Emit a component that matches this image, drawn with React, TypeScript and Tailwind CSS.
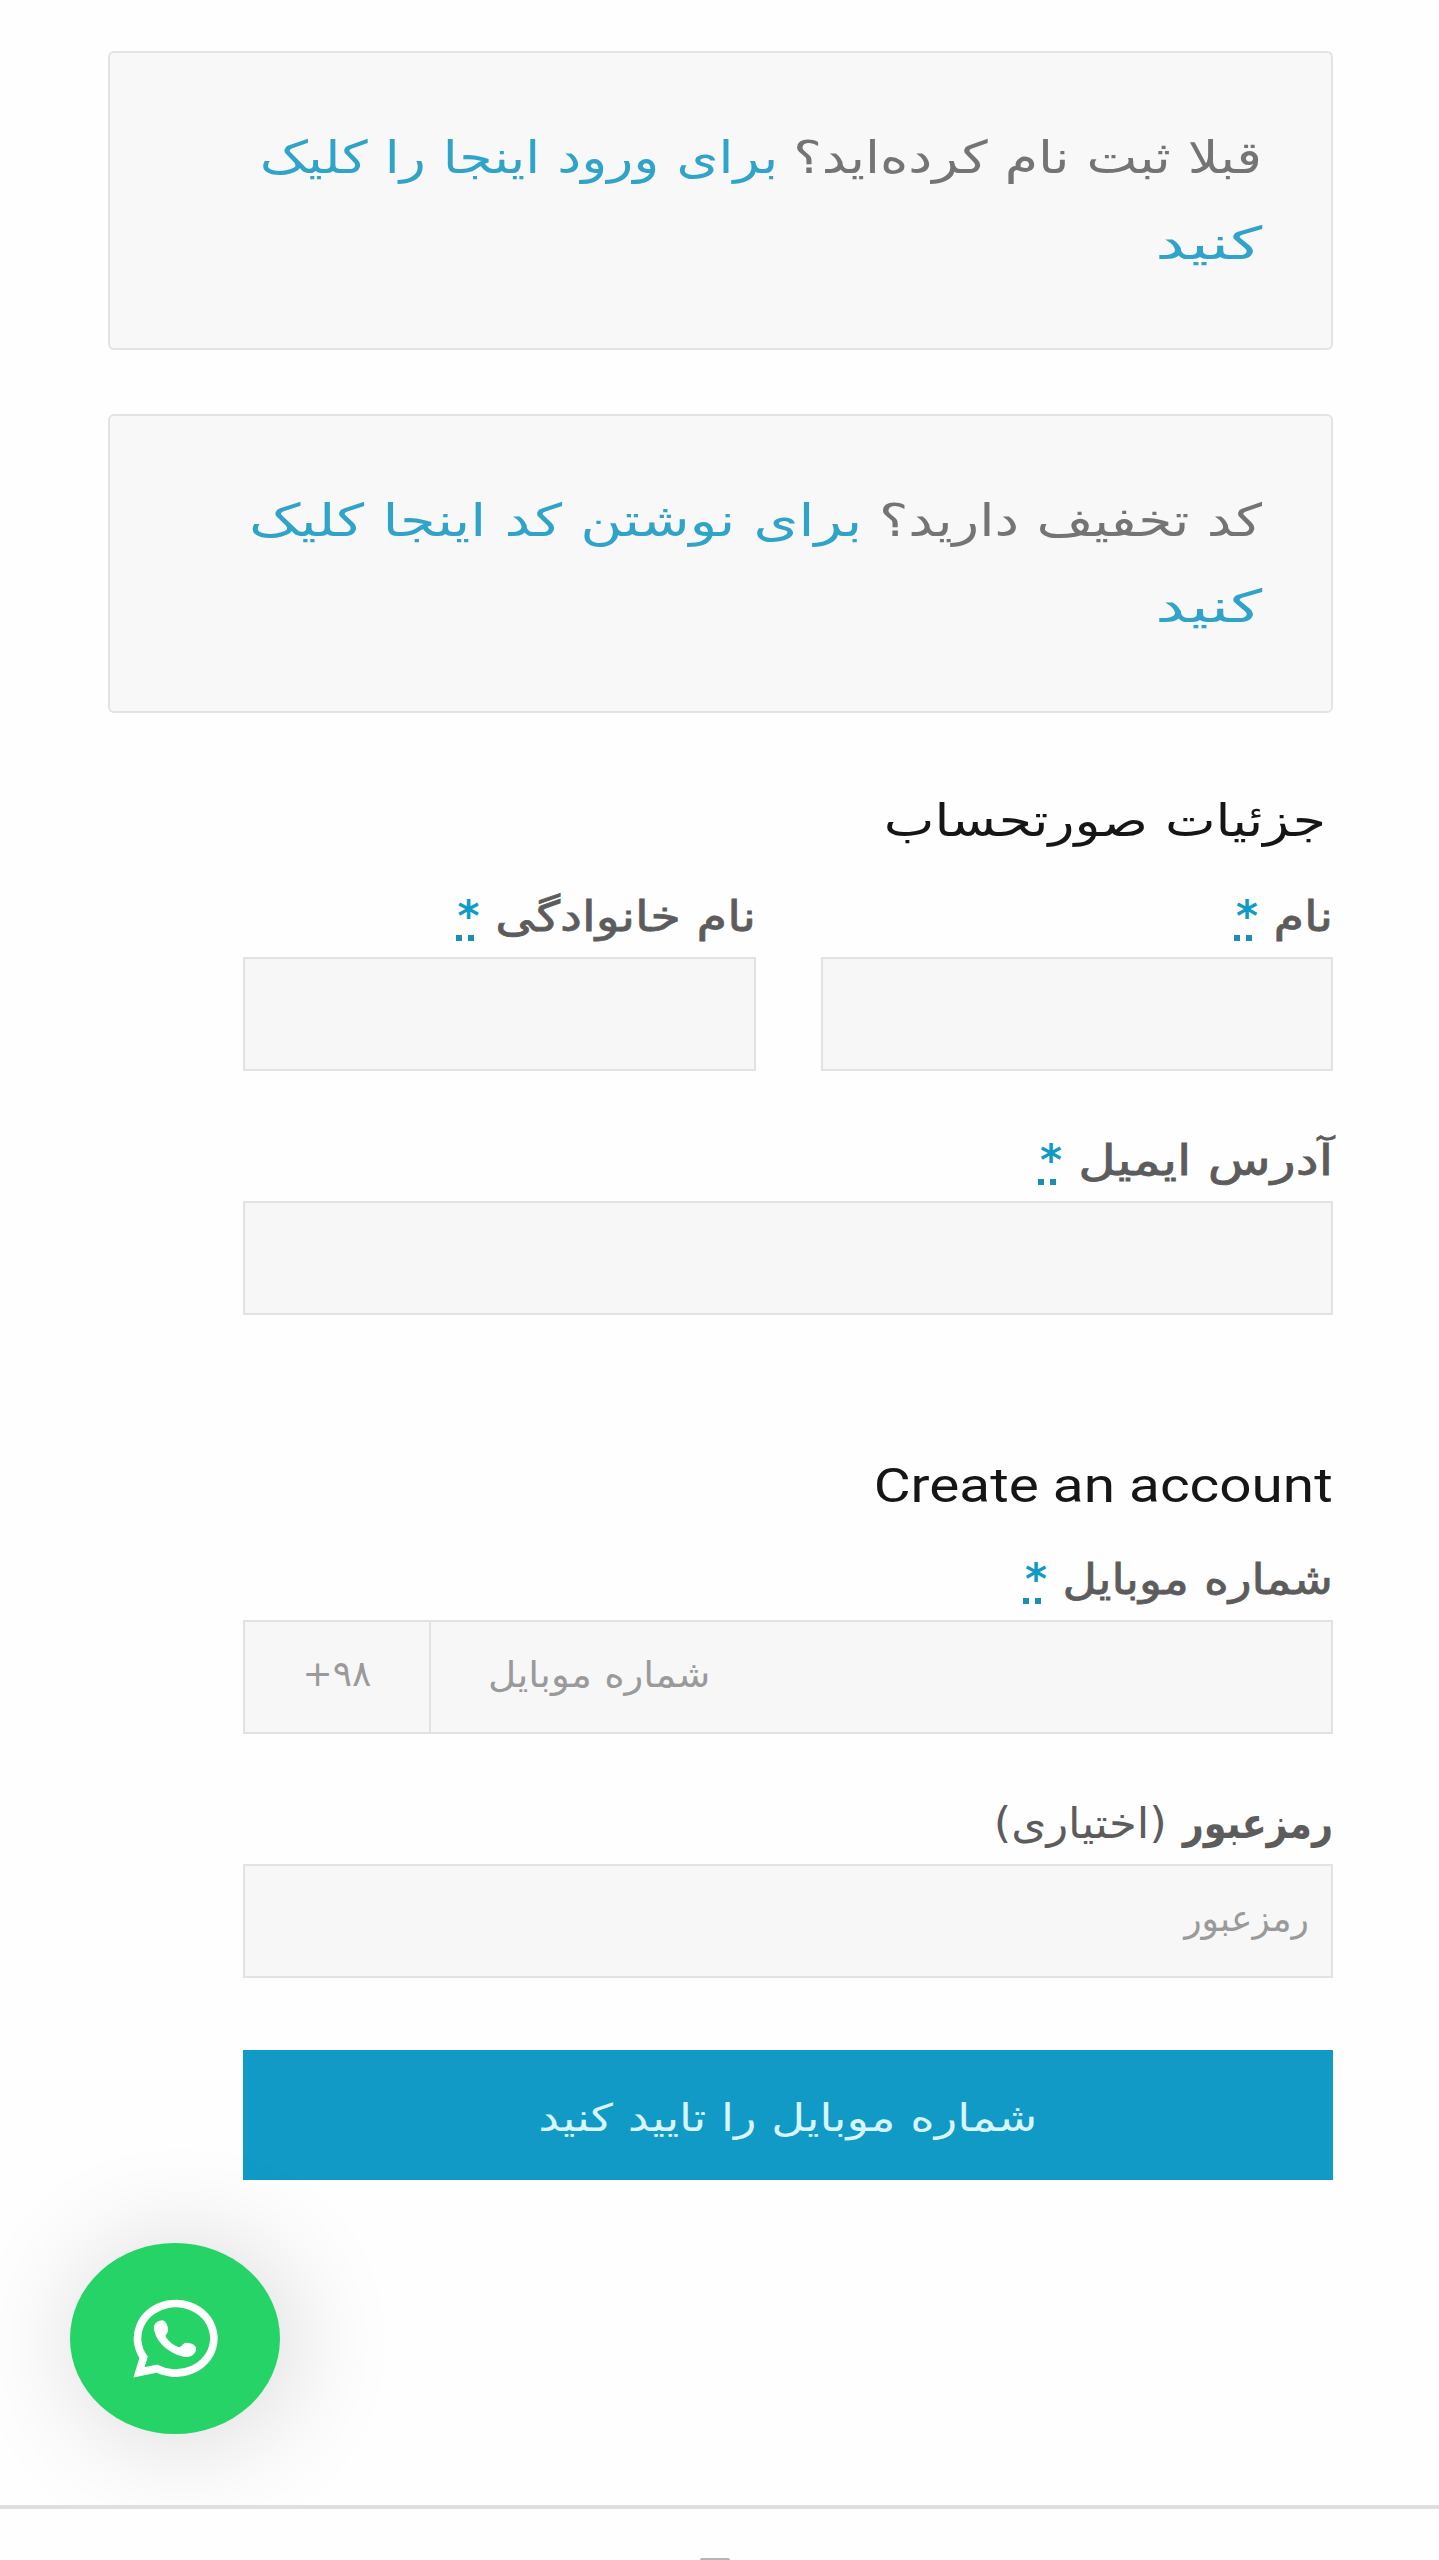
import React from "react";

const Required: React.FC = () => (
  <span className="relative mr-[16px] inline-block h-[76px] w-[24px] text-[42px] leading-[76px] font-bold text-[#129ac6]">
    *
    <span className="absolute bottom-[14px] left-0 flex gap-[6px]">
      <span className="h-[6px] w-[6px] bg-[#1a8fb0]" />
      <span className="h-[6px] w-[6px] bg-[#1a8fb0]" />
    </span>
  </span>
);

type NoticeProps = {
  question: string;
  questionClass: string;
  link: string;
  linkClass: string;
  rest: string;
};

const Notice: React.FC<NoticeProps> = ({ question, questionClass, link, linkClass, rest }) => (
  <div className="h-[299px] rounded-[6px] border-2 border-[#e3e3e3] bg-[#f8f8f8] pt-[62px] pr-[69px] text-[45px] leading-[86px] whitespace-nowrap text-[#747474]">
    <p className="flex">
      <span className={questionClass}>{question}</span>
      <a className={linkClass}>{link}</a>
    </p>
    <p>
      <a className="inline-block origin-right scale-x-[1.48] text-[#2fa3c8]">{rest}</a>
    </p>
  </div>
);

type FieldProps = {
  label: string;
  labelClass: string;
  required?: boolean;
  note?: string;
  children?: React.ReactNode;
};

const Field: React.FC<FieldProps> = ({ label, labelClass, required, note, children }) => (
  <div className="flex-1">
    <label className="flex h-[76px] items-center pb-[5px] whitespace-nowrap text-[42px] leading-[76px] text-[#5c5c5c]">
      <span className={labelClass}>{label}</span>
      {required && <Required />}
      {note && <span className="origin-right scale-x-[1.07]">{note}</span>}
    </label>
    <div className="flex h-[114px] items-center border-2 border-[#e2e2e2] bg-[#f7f7f7] text-[36px] text-[#9a9a9a]">
      {children}
    </div>
  </div>
);

const WhatsAppIcon: React.FC = () => (
  <svg viewBox="398 358 256 236" preserveAspectRatio="none" className="h-[79px] w-[85px]">
    <path
      d="M416 577 L430 532 A115 104 0 1 1 470 566 Z"
      fill="none"
      stroke="#fff"
      strokeWidth="23"
    />
    <path
      d="M483 422 C496 420 503 437 504 452 C504 458 496 464 496 469 C503 483 523 499 538 502 C545 501 549 489 558 489 C570 489 589 495 588 507 C587 524 569 533 554 531 C509 524 464 486 461 445 C460 434 470 423 483 422 Z"
      fill="#fff"
    />
  </svg>
);

const App: React.FC = () => {
  return (
    <div
      dir="rtl"
      className="relative flex h-[2560px] w-[1439px] flex-col overflow-hidden bg-[#fefefe] font-['DejaVu_Sans',sans-serif]"
    >
      <div className="mt-[51px] mr-[106px] ml-[108px] flex flex-col gap-[64px]">
        <Notice
          question="قبلا ثبت نام کرده‌اید؟"
          questionClass="w-[484px] origin-right scale-x-[1.197]"
          link="برای ورود اینجا را کلیک"
          linkClass="origin-right scale-x-[1.197] text-[#2fa3c8]"
          rest="کنید"
        />
        <Notice
          question="کد تخفیف دارید؟"
          questionClass="w-[400px] origin-right scale-x-[1.226]"
          link="برای نوشتن کد اینجا کلیک"
          linkClass="origin-right scale-x-[1.277] text-[#2fa3c8]"
          rest="کنید"
        />
      </div>

      <form className="mr-[106px] ml-[243px] flex flex-col">
        <h3 className="mt-[68px] h-[100px] pr-[7px] text-[45px] leading-[80px] whitespace-nowrap text-[#161616]">
          <span className="inline-block origin-right scale-x-[1.195]">جزئیات صورتحساب</span>
        </h3>
        <div className="flex gap-[65px]">
          <Field
            label="نام"
            labelClass="w-[59px] origin-right scale-x-[1.18] [-webkit-text-stroke:0.8px]"
            required
          />
          <Field
            label="نام خانوادگی"
            labelClass="w-[260px] origin-right scale-x-[1.178] [-webkit-text-stroke:0.8px]"
            required
          />
        </div>
        <div className="mt-[54px] flex">
          <Field
            label="آدرس ایمیل"
            labelClass="w-[255px] origin-right scale-x-[1.228] [-webkit-text-stroke:0.8px]"
            required
          />
        </div>

        <h3 className="mt-[131px] h-[98px] font-[Roboto] text-[49px] leading-[80px] whitespace-nowrap text-[#161616]">
          <span className="inline-block origin-right scale-x-[1.157]">Create an account</span>
        </h3>
        <div className="flex">
          <Field
            label="شماره موبایل"
            labelClass="w-[270px] origin-right scale-x-[1.127] [-webkit-text-stroke:0.8px]"
            required
          >
            <span className="flex-1 pb-[5px] pl-[57px] text-left">
              <span className="inline-block origin-left scale-x-[1.08]">شماره موبایل</span>
            </span>
            <span
              dir="ltr"
              className="flex h-full w-[186px] items-center justify-center border-r-2 border-[#e2e2e2] pb-[7px]"
            >
              +۹۸
            </span>
          </Field>
        </div>
        <div className="mt-[54px] flex">
          <Field
            label="رمزعبور"
            labelClass="w-[166px] origin-right scale-x-[0.87] font-bold"
            note="(اختیاری)"
          >
            <span className="inline-block pr-[22px] pb-[4px]">رمزعبور</span>
          </Field>
        </div>

        <button
          type="button"
          className="mt-[72px] flex h-[130px] items-center justify-center bg-[#129ac6] pt-[6px] text-[38px] text-[#d8f6ff]"
        >
          <span className="inline-block scale-x-[1.225]">شماره موبایل را تایید کنید</span>
        </button>
      </form>

      <a className="absolute top-[2243px] left-[70px] flex h-[191px] w-[210px] items-center justify-center rounded-[50%] bg-[#25d366] shadow-[8px_4px_110px_4px_rgba(0,0,0,0.15)]">
        <WhatsAppIcon />
      </a>

      <div className="relative mt-auto flex h-[55px] shrink-0 items-end justify-center border-t-4 border-[#dfdfdf] bg-[#fefefe]">
        <span className="ml-[-10px] h-[2px] w-[30px] rounded-t-full bg-[#b5b5b5]" />
      </div>
    </div>
  );
};

export default App;
